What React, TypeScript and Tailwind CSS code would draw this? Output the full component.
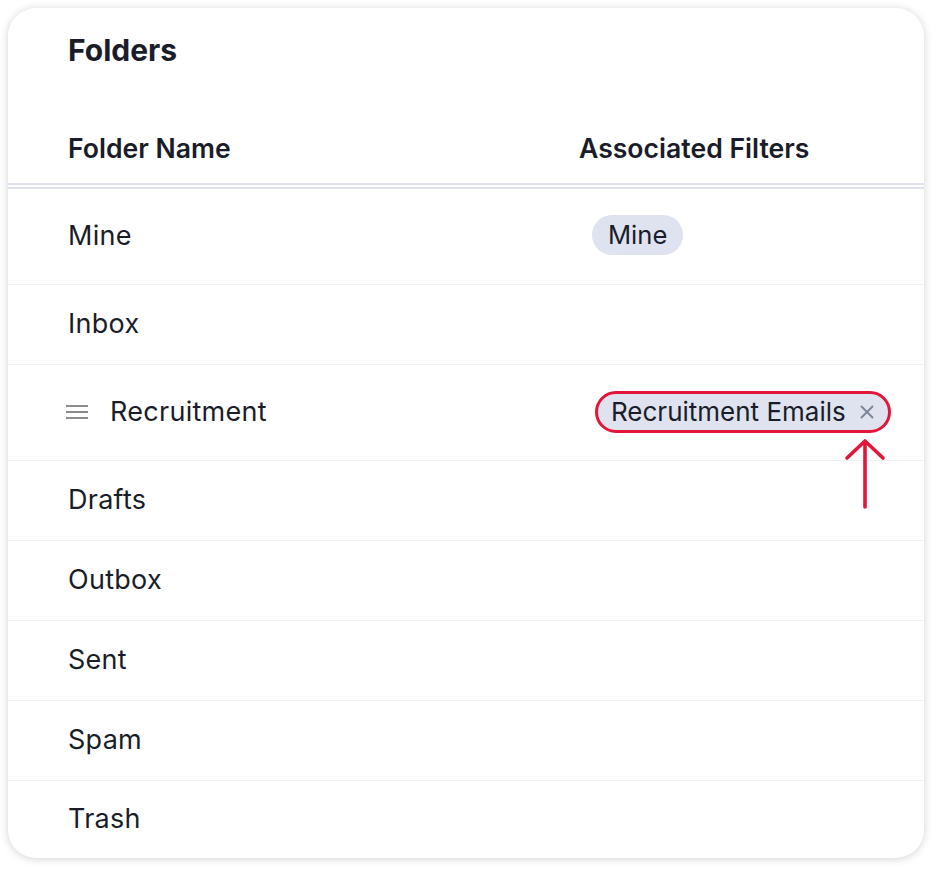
import React from 'react';

type FolderRow = {
  name: string;
  filter?: string;
  tall?: boolean;
  selected?: boolean;
};

const ROWS: FolderRow[] = [
  { name: 'Mine', filter: 'Mine', tall: true },
  { name: 'Inbox' },
  { name: 'Recruitment', filter: 'Recruitment Emails', tall: true, selected: true },
  { name: 'Drafts' },
  { name: 'Outbox' },
  { name: 'Sent' },
  { name: 'Spam' },
  { name: 'Trash' },
];

function DragHandle() {
  return (
    <svg width="22" height="14" viewBox="0 0 22 14" className="shrink-0">
      <path d="M0 1h22M0 7h22M0 13h22" stroke="#8c8c8c" strokeWidth="2" />
    </svg>
  );
}

function UpArrow() {
  return (
    <svg width="44" height="74" viewBox="0 0 44 74" className="absolute right-[4px] top-[46px]">
      <path d="M22 4v66M4 21L22 4l18 17" fill="none" stroke="#e2163a" strokeWidth="3.6" strokeLinecap="round" strokeLinejoin="round" />
    </svg>
  );
}

export default function App() {
  return (
    <div className="min-h-[870px] bg-white p-2" style={{ fontFamily: 'Inter, "Noto Sans", sans-serif' }}>
      <div className="w-[916px] h-[850px] rounded-[28px] bg-white shadow-[0_1px_8px_rgba(0,0,0,0.18)] overflow-hidden flex flex-col text-[#1a1d29]">
        {/* Title */}
        <div className="h-[84px] flex items-center pl-[60px] shrink-0">
          <h1 className="text-[30px] leading-[36px] font-bold">Folders</h1>
        </div>

        {/* Header */}
        <div className="h-[91px] flex items-end pb-[18px] pl-[60px] shrink-0">
          <div className="w-[511px] text-[26.6px] leading-[34px] font-semibold">Folder Name</div>
          <div className="text-[26.6px] leading-[34px] font-semibold">Associated Filters</div>
        </div>
        <div className="h-[2px] bg-[#dde2ee] shrink-0" />
        <div className="h-[2px] mt-[2px] bg-[#dde2ee] shrink-0" />

        {/* Rows */}
        <div className="flex flex-col flex-1">
          {ROWS.map((r, i) => {
            const last = i === ROWS.length - 1;
            return (
              <div
                key={r.name}
                className={`flex items-center shrink-0 ${r.tall ? 'h-[96px]' : 'h-[80px]'} ${last ? 'flex-1' : 'border-b border-[#eef1f1]'}`}
              >
                <div className={`w-[571px] flex items-center text-[27px] leading-[32px] tracking-[0.01em] -mt-[1px] ${r.selected ? 'pl-[58px] gap-[22px]' : 'pl-[60px]'}`}>
                  {r.selected && <DragHandle />}
                  <span>{r.name}</span>
                </div>
                {r.filter && !r.selected && (
                  <span className="ml-[13px] -mt-[3px] h-[40px] px-[16px] rounded-full bg-[#dfe3ef] flex items-center text-[25.6px] leading-[30px]">
                    {r.filter}
                  </span>
                )}
                {r.filter && r.selected && (
                  <div className="relative ml-[16px] -mt-[2px]">
                    <span className="h-[42px] pl-[13px] pr-[14px] rounded-full bg-[#dfe3ef] border-[3px] border-[#e2163a] flex items-center gap-[14px] text-[26px] leading-[30px]">
                      {r.filter}
                      <svg width="14" height="14" viewBox="0 0 14 14">
                        <path d="M1.5 1.5l11 11M12.5 1.5l-11 11" stroke="#7b8394" strokeWidth="1.8" strokeLinecap="round" />
                      </svg>
                    </span>
                    <UpArrow />
                  </div>
                )}
              </div>
            );
          })}
        </div>
      </div>
    </div>
  );
}
